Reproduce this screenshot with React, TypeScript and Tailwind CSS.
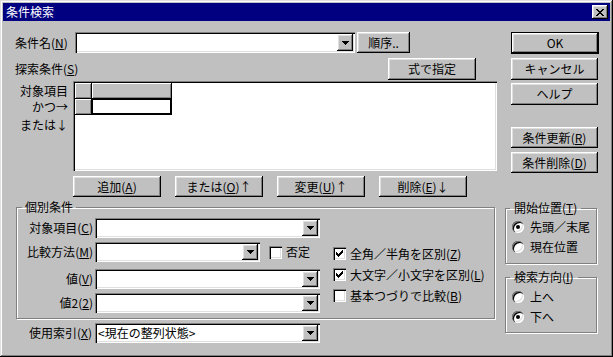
import React from "react";

const raised =
  "bg-[#c0c0c0] shadow-[inset_-1px_-1px_#000,inset_1px_1px_#fff,inset_-2px_-2px_#808080,inset_2px_2px_#dfdfdf]";
const sunken =
  "bg-white shadow-[inset_1px_1px_#808080,inset_2px_2px_#000,inset_-1px_-1px_#fff,inset_-2px_-2px_#dfdfdf]";
const etched =
  "border border-[#808080] shadow-[inset_1px_1px_#fff,1px_1px_#fff]";

function Pix({ rows }: { rows: string[] }) {
  const w = rows[0].length;
  const h = rows.length;
  return (
    <svg width={w} height={h} viewBox={`0 0 ${w} ${h}`} shapeRendering="crispEdges">
      {rows.flatMap((r, y) =>
        r.split("").map((c, x) =>
          c === "#" ? <rect key={`${x}-${y}`} x={x} y={y} width={1} height={1} fill="#000" /> : null
        )
      )}
    </svg>
  );
}

const ARROW = ["#######", ".#####.", "..###..", "...#..."];
const CLOSE = ["##....##", ".##..##.", "..####..", "...##...", "..####..", ".##..##.", "##....##"];
const CHECK = ["......#", ".....##", "#...###", "##.###.", "#####..", ".###...", "..#...."];

function Mn({ k }: { k: string }) {
  return (
    <span>
      (<span className="underline underline-offset-[1px]">{k}</span>)
    </span>
  );
}

function Btn({
  children,
  className = "",
  def = false,
}: {
  children: React.ReactNode;
  className?: string;
  def?: boolean;
}) {
  const inner = (
    <div className={`flex h-full w-full items-center justify-center ${raised}`}>{children}</div>
  );
  return <div className={`${def ? "border border-black" : ""} ${className}`}>{inner}</div>;
}

function Combo({ className = "", text }: { className?: string; text?: string }) {
  return (
    <div className={`flex p-[2px] ${sunken} ${className}`}>
      <div className="flex flex-1 items-center pl-[1px]">{text}</div>
      <div className={`flex w-[16px] items-center justify-center ${raised}`}>
        <Pix rows={ARROW} />
      </div>
    </div>
  );
}

function Check({ on, children }: { on?: boolean; children: React.ReactNode }) {
  return (
    <div className="flex items-center">
      <div className={`flex h-[13px] w-[13px] items-center justify-center ${sunken}`}>
        {on && <Pix rows={CHECK} />}
      </div>
      <span className="ml-[4px]">{children}</span>
    </div>
  );
}

function Radio({ on, children }: { on?: boolean; children: React.ReactNode }) {
  return (
    <div className="flex h-[20px] items-center pl-[6px]">
      <div className={`flex h-[12px] w-[12px] items-center justify-center rounded-full ${sunken}`}>
        {on && <div className="h-[4px] w-[4px] rounded-full bg-black" />}
      </div>
      <span className="ml-[6px]">{children}</span>
    </div>
  );
}

function Row({ label, children, className = "" }: { label: React.ReactNode; children: React.ReactNode; className?: string }) {
  return (
    <div className={`flex items-center ${className}`}>
      <div className="w-[76px] text-right">{label}</div>
      <div className="ml-[2px] flex items-center">{children}</div>
    </div>
  );
}

export default function App() {
  return (
    <div className="w-[613px] h-[357px] bg-[#c0c0c0] p-[3px] flex flex-col text-[12px] leading-[14px] text-black font-['Noto_Sans_CJK_JP','Noto_Sans',sans-serif] shadow-[inset_-1px_-1px_#000,inset_1px_1px_#dfdfdf,inset_-2px_-2px_#808080,inset_2px_2px_#fff]">
      {/* title bar */}
      <div className="flex h-[18px] items-center bg-[#000080] pl-[3px] pr-[2px] text-white">
        <span>条件検索</span>
        <div className={`ml-auto flex h-[14px] w-[16px] items-center justify-center ${raised}`}>
          <Pix rows={CLOSE} />
        </div>
      </div>

      <div className="flex pl-[12px] pt-[11px]">
        {/* left column */}
        <div className="flex w-[482px] flex-col">
          <div className="flex h-[21px] items-center">
            <div className="w-[60px]">
              条件名<Mn k="N" />
            </div>
            <Combo className="h-[21px] w-[280px]" />
            <Btn className="ml-[2px] h-[21px] w-[53px]">順序..</Btn>
          </div>

          <div className="mt-[5px] flex h-[22px] items-center pr-[21px]">
            <div className="flex-1">
              探索条件<Mn k="S" />
            </div>
            <Btn className="h-[22px] w-[88px]">式で指定</Btn>
          </div>

          <div className="mt-[1px] flex">
            <div className="flex w-[58px] flex-col items-end pr-[5px] pt-[2px]">
              <div className="h-[16px] leading-[16px]">対象項目</div>
              <div className="h-[16px] leading-[16px]">かつ→</div>
              <div className="mt-[2px] h-[16px] leading-[16px]">または↓</div>
            </div>
            <div className={`h-[90px] w-[424px] p-[2px] ${sunken}`}>
              <div className="grid w-fit grid-cols-[16px_79px] grid-rows-[15px_15px] gap-px bg-black pb-px pr-px">
                <div className="bg-[#c0c0c0] shadow-[inset_1px_1px_#fff,inset_-1px_-1px_#808080]" />
                <div className="bg-[#c0c0c0] shadow-[inset_1px_1px_#fff,inset_-1px_-1px_#808080]" />
                <div className="bg-[#c0c0c0] shadow-[inset_1px_1px_#fff,inset_-1px_-1px_#808080]" />
                <div className="border border-black bg-white" />
              </div>
            </div>
          </div>

          <div className="mt-[5px] flex gap-[14px] pl-[58px]">
            <Btn className="h-[21px] w-[88px]">
              追加<Mn k="A" />
            </Btn>
            <Btn className="h-[21px] w-[88px]">
              または<Mn k="O" />↑
            </Btn>
            <Btn className="h-[21px] w-[88px]">
              変更<Mn k="U" />↑
            </Btn>
            <Btn className="h-[21px] w-[88px]">
              削除<Mn k="E" />↓
            </Btn>
          </div>

          <fieldset className={`mt-[4px] ml-[1px] h-[118px] w-[479px] ${etched}`}>
            <legend className="ml-[5px] px-[3px] leading-[12px]">個別条件</legend>
            <div className="flex">
              <div className="flex w-[303px] flex-col">
                <Row className="mt-[5px]" label={<>対象項目<Mn k="C" /></>}>
                  <Combo className="h-[20px] w-[225px]" />
                </Row>
                <Row className="mt-[4px]" label={<>比較方法<Mn k="M" /></>}>
                  <Combo className="h-[20px] w-[165px]" />
                  <div className="ml-[9px]">
                    <Check>否定</Check>
                  </div>
                </Row>
                <Row className="mt-[7px]" label={<>値<Mn k="V" /></>}>
                  <Combo className="h-[20px] w-[225px]" />
                </Row>
                <Row className="mt-[4px]" label={<>値2<Mn k="2" /></>}>
                  <Combo className="h-[20px] w-[225px]" />
                </Row>
              </div>
              <div className="ml-[13px] mt-[30px] flex flex-col">
                <div className="flex h-[21px] items-center">
                  <Check on>
                    全角／半角を区別<Mn k="Z" />
                  </Check>
                </div>
                <div className="flex h-[21px] items-center">
                  <Check on>
                    大文字／小文字を区別<Mn k="L" />
                  </Check>
                </div>
                <div className="flex h-[21px] items-center">
                  <Check>
                    基本つづりで比較<Mn k="B" />
                  </Check>
                </div>
              </div>
            </div>
          </fieldset>

          <div className="mt-[4px] flex items-center">
            <div className="w-[77px] text-right">
              使用索引<Mn k="X" />
            </div>
            <Combo className="ml-[3px] h-[20px] w-[225px]" text="<現在の整列状態>" />
          </div>
        </div>

        {/* right column */}
        <div className="ml-[8px] flex w-[94px] flex-col">
          <Btn def className="ml-[6px] h-[22px] w-[88px]">OK</Btn>
          <Btn className="ml-[6px] mt-[4px] h-[22px] w-[87px]">キャンセル</Btn>
          <Btn className="ml-[6px] mt-[3px] h-[22px] w-[87px]">ヘルプ</Btn>
          <Btn className="ml-[6px] mt-[22px] h-[21px] w-[87px]">
            条件更新<Mn k="R" />
          </Btn>
          <Btn className="ml-[6px] mt-[4px] h-[21px] w-[87px]">
            条件削除<Mn k="D" />
          </Btn>

          <fieldset className={`mt-[29px] h-[62px] w-[92px] ${etched}`}>
            <legend className="ml-[4px] px-[4px] leading-[12px]">
              開始位置<Mn k="T" />
            </legend>
            <div className="mt-[3px]">
              <Radio on>先頭／末尾</Radio>
              <Radio>現在位置</Radio>
            </div>
          </fieldset>

          <fieldset className={`mt-[7px] h-[62px] w-[92px] ${etched}`}>
            <legend className="ml-[4px] px-[4px] leading-[12px]">
              検索方向<Mn k="I" />
            </legend>
            <div className="mt-[4px]">
              <Radio>上へ</Radio>
              <Radio on>下へ</Radio>
            </div>
          </fieldset>
        </div>
      </div>
    </div>
  );
}
